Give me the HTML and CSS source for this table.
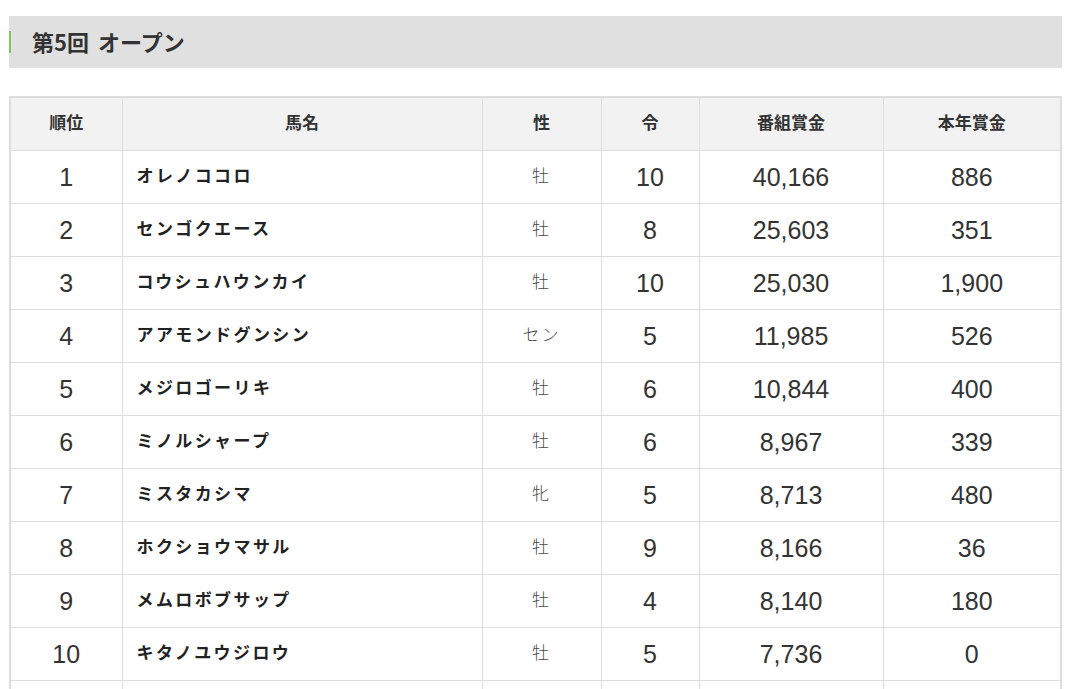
FILE: index.html
```html
<!DOCTYPE html>
<html lang="ja">
<head>
<meta charset="utf-8">
<title>第5回 オープン</title>
<link rel="stylesheet" href="styles.css">
</head>
<body>
<div class="page">
  <h2 class="heading"><span class="heading-text">第5回 オープン</span></h2>
  <table class="ranking">
    <colgroup>
      <col class="c-rank"><col class="c-name"><col class="c-sex"><col class="c-age"><col class="c-prize"><col class="c-year">
    </colgroup>
    <thead>
      <tr><th>順位</th><th>馬名</th><th>性</th><th>令</th><th>番組賞金</th><th>本年賞金</th></tr>
    </thead>
    <tbody>
      <tr><td class="num">1</td><td class="name">オレノココロ</td><td class="sex">牡</td><td class="num">10</td><td class="num">40,166</td><td class="num">886</td></tr>
      <tr><td class="num">2</td><td class="name">センゴクエース</td><td class="sex">牡</td><td class="num">8</td><td class="num">25,603</td><td class="num">351</td></tr>
      <tr><td class="num">3</td><td class="name">コウシュハウンカイ</td><td class="sex">牡</td><td class="num">10</td><td class="num">25,030</td><td class="num">1,900</td></tr>
      <tr><td class="num">4</td><td class="name">アアモンドグンシン</td><td class="sex">セン</td><td class="num">5</td><td class="num">11,985</td><td class="num">526</td></tr>
      <tr><td class="num">5</td><td class="name">メジロゴーリキ</td><td class="sex">牡</td><td class="num">6</td><td class="num">10,844</td><td class="num">400</td></tr>
      <tr><td class="num">6</td><td class="name">ミノルシャープ</td><td class="sex">牡</td><td class="num">6</td><td class="num">8,967</td><td class="num">339</td></tr>
      <tr><td class="num">7</td><td class="name">ミスタカシマ</td><td class="sex">牝</td><td class="num">5</td><td class="num">8,713</td><td class="num">480</td></tr>
      <tr><td class="num">8</td><td class="name">ホクショウマサル</td><td class="sex">牡</td><td class="num">9</td><td class="num">8,166</td><td class="num">36</td></tr>
      <tr><td class="num">9</td><td class="name">メムロボブサップ</td><td class="sex">牡</td><td class="num">4</td><td class="num">8,140</td><td class="num">180</td></tr>
      <tr><td class="num">10</td><td class="name">キタノユウジロウ</td><td class="sex">牡</td><td class="num">5</td><td class="num">7,736</td><td class="num">0</td></tr>
      <tr class="filler"><td></td><td></td><td></td><td></td><td></td><td></td></tr>
    </tbody>
  </table>
</div>
</body>
</html>
```

FILE: styles.css
```css
html, body {
  margin: 0;
  padding: 0;
  background: #fff;
}
body {
  font-family: "Liberation Sans", Arial, "Noto Sans CJK JP", sans-serif;
  color: #333;
}
.page {
  padding: 16px 12px 0 9px;
}
.heading {
  margin: 0 0 28px 0;
  height: 52px;
  background: #e0e0e0;
  display: flex;
  align-items: center;
  position: relative;
  color: #333;
}
.heading::before {
  content: "";
  position: absolute;
  left: 0;
  top: 15px;
  width: 2px;
  height: 22px;
  background: #7dc95e;
}
.heading-text {
  padding-left: 23px;
  padding-bottom: 3px;
  font-family: "Noto Sans CJK JP", sans-serif;
  font-weight: bold;
  font-size: 22px;
  line-height: 26px;
  word-spacing: 4px;
}
.ranking {
  width: 100%;
  border-collapse: collapse;
  table-layout: fixed;
  border-top: 2px solid #dddddd;
  border-left: 2px solid #dddddd;
  border-right: 2px solid #dddddd;
}
.c-rank { width: 112px; }
.c-name { width: 360px; }
.c-sex { width: 119px; }
.c-age { width: 98px; }
.c-prize { width: 184px; }
.c-year { width: auto; }
.ranking th,
.ranking td {
  border: 1px solid #dddddd;
  height: 53px;
  padding: 0;
  line-height: 20px;
  text-align: center;
  vertical-align: middle;
  box-sizing: border-box;
}
.ranking th {
  background: #f2f2f2;
  font-family: "Noto Sans CJK JP", sans-serif;
  font-weight: bold;
  font-size: 17px;
  color: #333;
  padding-bottom: 4px;
}
.ranking td.num {
  font-family: "Liberation Sans", Arial, sans-serif;
  font-size: 25px;
  color: #333;
}
.ranking td.name {
  text-align: left;
  padding-left: 14px;
  font-family: "Noto Sans CJK JP", sans-serif;
  font-weight: bold;
  font-size: 17px;
  letter-spacing: 2.4px;
  color: #222;
  padding-bottom: 3px;
}
.ranking td.sex {
  font-family: "Noto Sans CJK JP", sans-serif;
  font-weight: 300;
  font-size: 17px;
  letter-spacing: 2px;
  color: #4a4a4a;
  padding-bottom: 3px;
}
```
